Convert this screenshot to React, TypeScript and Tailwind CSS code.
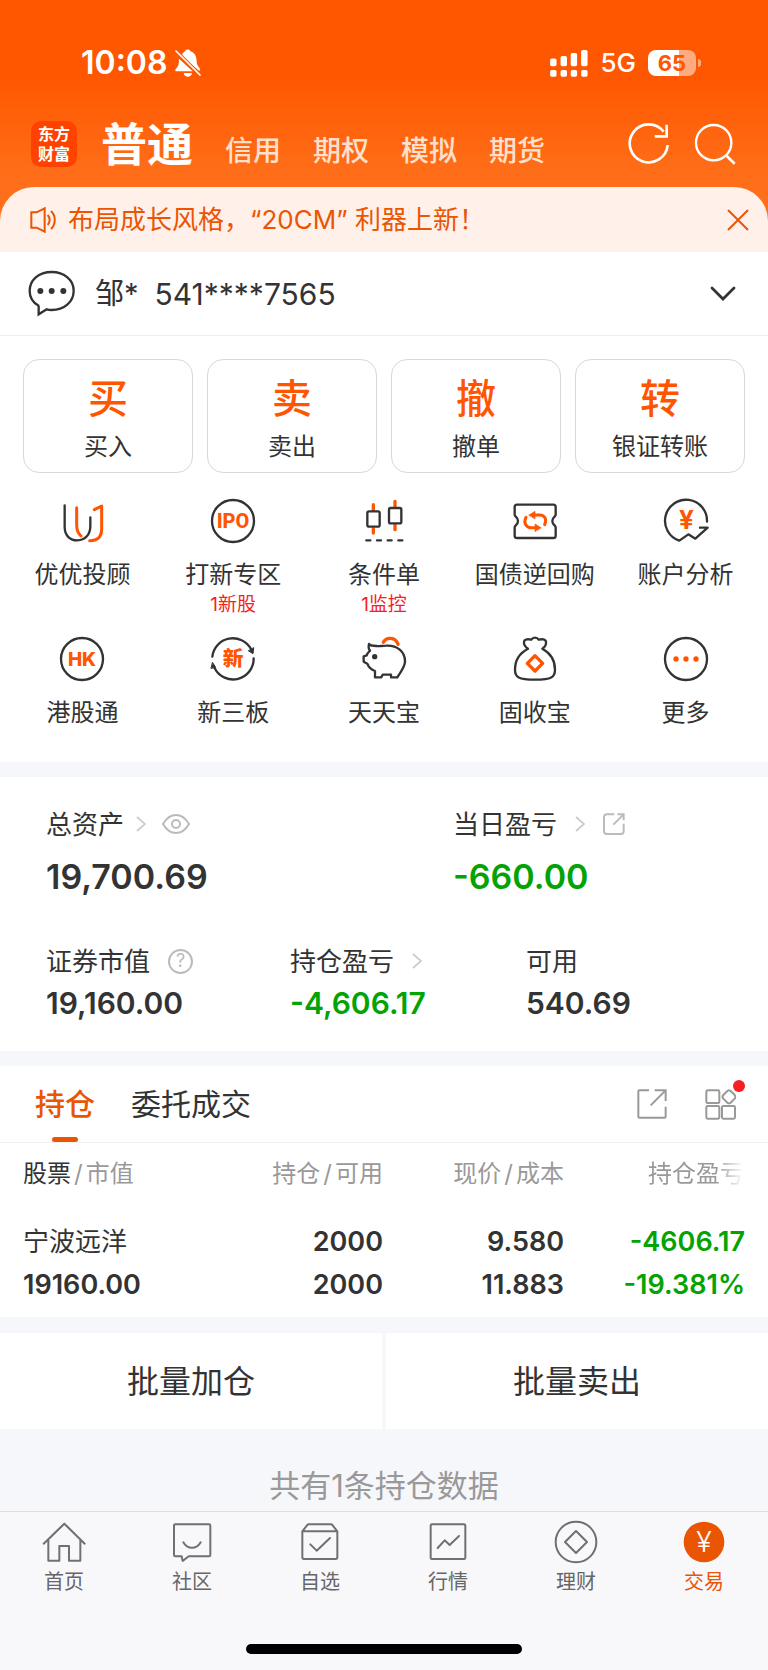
import type { ReactNode } from 'react';

const INK = '#333333';
const ORANGE = '#ff5500';

function Glyph({ children, className = '' }: { children: ReactNode; className?: string }) {
  return (
    <svg
      viewBox="0 0 144 144"
      className={`h-12 w-12 shrink-0 ${className}`}
      fill="none"
      strokeLinecap="round"
      strokeLinejoin="round"
      aria-hidden="true"
    >
      {children}
    </svg>
  );
}

const advisorIcon = (
  <Glyph>
    <path d="M20 25V90C20 117 37 130 58 130C82 130 97 112 97 88V61" stroke={INK} strokeWidth="7" />
    <path d="M56 32V84C56 99 60 109 69 117M109 38L131 27V95C131 119 118 131 95 131" stroke={ORANGE} strokeWidth="9" />
  </Glyph>
);
const ipoIcon = (
  <Glyph>
    <circle cx="72" cy="72" r="63" stroke={INK} strokeWidth="7" />
    <text x="72" y="93" textAnchor="middle" fontSize="60" fontWeight="800" fill={ORANGE} className="font-['Roboto',sans-serif]">IPO</text>
  </Glyph>
);
const candleIcon = (
  <Glyph>
    <path d="M40 23V38M40 95V108M105 13V28M105 84V98" stroke={ORANGE} strokeWidth="10" />
    <rect x="22" y="43" width="37" height="46" rx="5" stroke={INK} strokeWidth="7" />
    <rect x="87" y="33" width="37" height="46" rx="5" stroke={INK} strokeWidth="7" />
    <path d="M19 130H31M51 130H63M83 130H95M115 130H127" stroke={INK} strokeWidth="7" />
  </Glyph>
);
const repoIcon = (
  <Glyph>
    <path d="M18 23H127a7 7 0 0 1 7 7V53C134 60 124 60 124 72C124 84 134 84 134 91V116a7 7 0 0 1 -7 7H18a7 7 0 0 1 -7 -7V91C11 84 21 84 21 72C21 60 11 60 11 53V30a7 7 0 0 1 7 -7Z" stroke={INK} strokeWidth="7" />
    <path d="M70 54H86C102 54 108 68 101 83M45 61C37 76 44 92 60 92H74" stroke={ORANGE} strokeWidth="9" />
    <path d="M54 54L72 43V65ZM90 92L72 81V103Z" fill={ORANGE} stroke={ORANGE} strokeWidth="2" />
  </Glyph>
);
const analysisIcon = (
  <Glyph>
    <path d="M135 74A63 63 0 1 0 52 131L79 112L100 125L137 92H114" stroke={INK} strokeWidth="7" />
    <text x="73" y="95" textAnchor="middle" fontSize="78" fontWeight="700" fill={ORANGE} className="font-['Inter',sans-serif]">¥</text>
  </Glyph>
);
const hkIcon = (
  <Glyph>
    <circle cx="72" cy="72" r="63" stroke={INK} strokeWidth="7" />
    <text x="72" y="93" textAnchor="middle" fontSize="57" fontWeight="800" fill={ORANGE} className="font-['Inter',sans-serif]">HK</text>
  </Glyph>
);
const newBoardIcon = (
  <Glyph>
    <path d="M10 65A62 62 0 0 1 126 42M134 70A62 62 0 0 1 17 100" stroke={INK} strokeWidth="7" />
    <path d="M134 39L132 56L119 48ZM11 83L20 97L7 100Z" fill={INK} stroke={INK} strokeWidth="3" />
    <text x="72" y="94" textAnchor="middle" fontSize="62" fontWeight="800" fill={ORANGE} className="font-['Noto_Sans_CJK_SC',sans-serif]">新</text>
  </Glyph>
);
const piggyIcon = (
  <Glyph>
    <path d="M70 22C78 6 106 4 114 28" stroke={ORANGE} strokeWidth="10" />
    <path d="M27 27C33 35 41 31 50 33C56 35 64 32 78 32C112 30 135 50 135 79C135 96 124 108 112 127H93V119H68L64 127H45V108C36 105 26 97 22 86L11 80V64L20 61C22 54 26 51 30 47C25 42 25 35 27 27Z" fill="white" stroke={INK} strokeWidth="7" />
    <circle cx="44" cy="65" r="8" fill={INK} />
  </Glyph>
);
const bagIcon = (
  <Glyph>
    <path d="M51 41C42 35 38 28 39 21C40 11 53 12 61 14C66 6 78 6 83 14C92 12 104 11 105 21C106 29 102 36 94 41C118 54 132 76 132 104C132 126 122 134 72 134C22 134 12 126 12 104C12 76 26 54 51 41Z" stroke={INK} strokeWidth="7" />
    <path d="M72 62L95 85L72 108L49 85Z" stroke={ORANGE} strokeWidth="10" />
  </Glyph>
);
const moreIcon = (
  <Glyph>
    <circle cx="72" cy="72" r="63" stroke={INK} strokeWidth="7" />
    <circle cx="42" cy="72" r="8" fill={ORANGE} />
    <circle cx="72" cy="72" r="8" fill={ORANGE} />
    <circle cx="102" cy="72" r="8" fill={ORANGE} />
  </Glyph>
);

const quickActions = [
  { mark: '买', label: '买入' },
  { mark: '卖', label: '卖出' },
  { mark: '撤', label: '撤单' },
  { mark: '转', label: '银证转账' },
];

const services: { label: string; note?: string; icon: ReactNode }[] = [
  { label: '优优投顾', icon: advisorIcon },
  { label: '打新专区', note: '1新股', icon: ipoIcon },
  { label: '条件单', note: '1监控', icon: candleIcon },
  { label: '国债逆回购', icon: repoIcon },
  { label: '账户分析', icon: analysisIcon },
  { label: '港股通', icon: hkIcon },
  { label: '新三板', icon: newBoardIcon },
  { label: '天天宝', icon: piggyIcon },
  { label: '固收宝', icon: bagIcon },
  { label: '更多', icon: moreIcon },
];

const navItems: { label: string; active?: boolean; icon: ReactNode }[] = [
  {
    label: '首页',
    icon: <path d="M11 77L73 17L134 77M25 66V128H58V84H87V128H121V66" />,
  },
  {
    label: '社区',
    icon: <path d="M22 19H123a4 4 0 0 1 4 4V111a4 4 0 0 1 -4 4H62L44 129L41 115H22a4 4 0 0 1 -4 -4V23a4 4 0 0 1 4 -4ZM46 73C58 95 86 95 98 73" />,
  },
  {
    label: '自选',
    icon: <path d="M19 40L33 22Q35 19 39 19H104Q108 19 110 22L124 40V118a5 5 0 0 1 -5 5H24a5 5 0 0 1 -5 -5ZM19 40H124M43 79L62 98L102 60" />,
  },
  {
    label: '行情',
    icon: (
      <>
        <rect x="20" y="19" width="104" height="104" rx="4" />
        <path d="M41 90L62 67L77 81L105 54" />
      </>
    ),
  },
  {
    label: '理财',
    icon: (
      <>
        <circle cx="72" cy="72" r="61" />
        <path d="M72 39L105 72L72 105L39 72Z" />
      </>
    ),
  },
  {
    label: '交易',
    active: true,
    icon: (
      <>
        <circle cx="72" cy="72" r="61" fill="#ea5504" stroke="none" />
        <text x="72" y="103" textAnchor="middle" fontSize="86" fontWeight="300" fill="white" stroke="none" className="font-['Inter',sans-serif]">¥</text>
      </>
    ),
  },
];

function Chevron() {
  return (
    <svg viewBox="0 0 10 18" className="h-[18px] w-[10px]" fill="none" stroke="#cccccc" strokeWidth="1.8" aria-hidden="true">
      <path d="M1 2L9 9L1 16" />
    </svg>
  );
}

function Header() {
  return (
    <header className="bg-[linear-gradient(to_bottom,#ff5700_0px,#ff5700_75px,#ff6d18_170px,#ff7420_252px)]">
      <div className="flex h-[88px] items-center justify-between pt-[38px] pr-[67px] pl-[81px] text-white">
        <div className="flex items-center gap-2">
          <span className="text-[32px] leading-10 font-semibold">10:08</span>
          <svg viewBox="0 0 78 84" className="h-7 w-[26px]" fill="white" aria-label="静音">
            <path d="M18 22C22 12 28 8 30 7C31 0 45 0 46 7C60 11 64 22 65 36C65 46 68 50 73 56L76 63L72 65ZM12 29L53 67H4C0 67 0 62 3 59C11 51 12 42 12 29ZM26 72H51C49 87 28 87 26 72Z" />
            <path d="M3 6L75 78" stroke="#ff5700" strokeWidth="11" />
            <path d="M3 6L75 78" stroke="white" strokeWidth="5" strokeLinecap="round" />
          </svg>
        </div>
        <div className="flex items-center">
          <svg viewBox="0 0 112 80" className="h-[27px] w-[38px]" fill="white" aria-label="信号">
            <rect x="0" y="25" width="19" height="23" rx="5" />
            <rect x="31" y="18" width="19" height="30" rx="5" />
            <rect x="61" y="9" width="19" height="39" rx="5" />
            <rect x="92" y="0" width="19" height="48" rx="5" />
            <rect x="0" y="59" width="19" height="20" rx="5" />
            <rect x="31" y="59" width="19" height="20" rx="5" />
            <rect x="61" y="59" width="19" height="20" rx="5" />
            <rect x="92" y="59" width="19" height="20" rx="5" />
          </svg>
          <span className="ml-3 text-[26px] leading-8 font-medium">5G</span>
          <div className="ml-3 flex h-[26px] w-12 items-center justify-center rounded-lg bg-[linear-gradient(to_right,#ffffff_65%,#ffab80_65%)]">
            <span className="text-[22px] leading-6 font-bold text-[#ff5700]">65</span>
          </div>
          <span className="ml-0.5 h-2 w-[3px] rounded-r-full bg-[#ffab80]" />
        </div>
      </div>
      <div className="flex h-[99px] items-center pt-3 pr-8 pl-[31px]">
        <div className="grid h-[46px] w-[46px] shrink-0 place-content-center rounded-[10px] bg-[#ff4200] text-center text-[16px] leading-5 font-bold text-white">
          <p>东方<br />财富</p>
        </div>
        <nav className="ml-6 flex items-baseline gap-8 text-[28px] font-medium text-[#ffe0cf]">
          <a href="#normal" className="text-[46px] leading-[60px] font-bold text-white">普通</a>
          <a href="#credit">信用</a>
          <a href="#options">期权</a>
          <a href="#simulate">模拟</a>
          <a href="#futures">期货</a>
        </nav>
        <div className="ml-auto flex items-center gap-6">
          <button type="button" aria-label="刷新">
            <svg viewBox="0 0 126 126" className="h-[42px] w-[42px]" fill="none" stroke="white" strokeWidth="8" aria-hidden="true">
              <path d="M119 66A57 57 0 1 1 107 26M116 5V40H80" />
            </svg>
          </button>
          <button type="button" aria-label="搜索">
            <svg viewBox="0 0 126 126" className="h-[42px] w-[42px]" fill="none" stroke="white" strokeWidth="7" aria-hidden="true">
              <circle cx="59" cy="59" r="53" />
              <path d="M96 97L122 122" strokeWidth="8" />
            </svg>
          </button>
        </div>
      </div>
      <div className="flex h-[65px] items-center rounded-t-[34px] bg-[#fff1ea] pr-[19px] pl-[30px] text-[#ea5504]">
        <svg viewBox="0 0 78 78" className="h-[26px] w-[26px]" fill="none" stroke="#ea5504" strokeWidth="6" aria-hidden="true">
          <path d="M4 16H20L44 4V74L20 62H4ZM53 24C61 32 61 46 53 54M63 12C78 26 78 52 63 66" />
        </svg>
        <p className="ml-3 text-[26px] leading-9">布局成长风格，“20CM” 利器上新！</p>
        <button type="button" aria-label="关闭" className="ml-auto">
          <svg viewBox="0 0 22 22" className="h-[22px] w-[22px]" stroke="#ea5504" strokeWidth="2" aria-hidden="true">
            <path d="M1 1L21 21M21 1L1 21" />
          </svg>
        </button>
      </div>
    </header>
  );
}

function Account() {
  return (
    <button type="button" className="flex h-[84px] w-full items-center border-b border-[#eeeeee] bg-white pr-8 pl-7">
      <svg viewBox="0 0 141 141" className="h-[47px] w-[47px]" fill="none" stroke={INK} strokeWidth="7" aria-hidden="true">
        <path d="M33 108C14 98 5 82 5 63C5 30 32 6 71 6C109 6 137 30 137 62C137 96 108 120 71 120Q62 120 56 118L32 133V107" />
        <g fill={INK} stroke="none">
          <circle cx="37" cy="63" r="9" />
          <circle cx="71" cy="63" r="9" />
          <circle cx="106" cy="63" r="9" />
        </g>
      </svg>
      <span className="ml-5 text-[29px] leading-9">邹*</span>
      <span className="ml-4 text-[30px] leading-9">541****7565</span>
      <svg viewBox="0 0 26 16" className="ml-auto h-4 w-[26px]" fill="none" stroke={INK} strokeWidth="2.8" strokeLinecap="round" aria-hidden="true">
        <path d="M2 2L13 13L24 2" />
      </svg>
    </button>
  );
}

function Services() {
  return (
    <section className="bg-white pb-[31px]">
      <div className="grid grid-cols-4 gap-3.5 px-[23px] pt-[23px]">
        {quickActions.map((a) => (
          <button key={a.label} type="button" className="flex h-[114px] flex-col items-center rounded-2xl border border-[#d8d8d8] pt-[15px]">
            <span className="text-[40px] leading-[48px] font-medium text-[#ff5500]">{a.mark}</span>
            <span className="mt-1.5 text-[24px] leading-9">{a.label}</span>
          </button>
        ))}
      </div>
      <div className="grid grid-cols-5 gap-y-[18px] px-[7px] pt-6">
        {services.map((s) => (
          <button key={s.label} type="button" className="flex flex-col items-center justify-start">
            {s.icon}
            <span className="mt-3 text-[24px] leading-9 whitespace-nowrap">{s.label}</span>
            {s.note && <span className="text-[19px] leading-6 text-[#f51f24]">{s.note}</span>}
          </button>
        ))}
      </div>
    </section>
  );
}

function Assets() {
  return (
    <section className="mt-[15px] bg-white px-[46px] pt-[29px] pb-7">
      <div className="grid grid-cols-[407px_1fr]">
        <div>
          <div className="flex h-9 items-center text-[26px]">
            总资产
            <span className="ml-3"><Chevron /></span>
            <button type="button" aria-label="隐藏金额" className="ml-4">
              <svg viewBox="0 0 84 60" className="h-5 w-7" fill="none" stroke="#bbbbbb" strokeWidth="6" aria-hidden="true">
                <path d="M3 30C24 -6 60 -6 81 30C60 66 24 66 3 30Z" />
                <circle cx="42" cy="30" r="12" />
              </svg>
            </button>
          </div>
          <div className="mt-3 text-[34px] leading-[46px] font-semibold">19,700.69</div>
        </div>
        <div>
          <div className="flex h-9 items-center text-[26px]">
            当日盈亏
            <span className="ml-[18px]"><Chevron /></span>
            <button type="button" aria-label="分享盈亏" className="ml-[18px]">
              <svg viewBox="0 0 66 66" className="h-[22px] w-[22px]" fill="none" stroke="#bbbbbb" strokeWidth="6" aria-hidden="true">
                <path d="M34 4H12Q3 4 3 13V54Q3 63 12 63H53Q62 63 62 54V32M43 4H62V22M61 5L31 35" />
              </svg>
            </button>
          </div>
          <div className="mt-3 text-[34px] leading-[46px] font-semibold text-[#03a303]">-660.00</div>
        </div>
      </div>
      <div className="mt-[43px] grid grid-cols-[244px_236px_1fr]">
        <div>
          <div className="flex h-9 items-center text-[26px]">
            证券市值
            <button type="button" aria-label="说明" className="ml-[18px] flex h-[25px] w-[25px] items-center justify-center rounded-full border-2 border-[#bbbbbb] text-[18px] leading-none text-[#bbbbbb]">
              ?
            </button>
          </div>
          <div className="mt-1 text-[30px] leading-10 font-semibold">19,160.00</div>
        </div>
        <div>
          <div className="flex h-9 items-center text-[26px]">
            持仓盈亏
            <span className="ml-[18px]"><Chevron /></span>
          </div>
          <div className="mt-1 text-[30px] leading-10 font-semibold text-[#03a303]">-4,606.17</div>
        </div>
        <div>
          <div className="flex h-9 items-center text-[26px]">可用</div>
          <div className="mt-1 text-[30px] leading-10 font-semibold">540.69</div>
        </div>
      </div>
    </section>
  );
}

function Positions() {
  return (
    <section className="mt-[15px] bg-white">
      <div className="flex h-[77px] border-b border-[#f2f2f2] pr-8 pl-[35px]">
        <div role="tablist" className="flex gap-9 text-[30px]">
          <button type="button" role="tab" aria-selected="true" className="flex flex-col items-center pt-[18px] font-medium text-[#ea5504]">
            <span className="leading-10">持仓</span>
            <span className="mt-auto h-[5px] w-[26px] rounded-full bg-[#ea5504]" />
          </button>
          <button type="button" role="tab" aria-selected="false" className="flex flex-col pt-[18px]">
            <span className="leading-10">委托成交</span>
          </button>
        </div>
        <div className="ml-auto flex items-center gap-[38px]">
          <button type="button" aria-label="分享持仓">
            <svg viewBox="0 0 90 90" className="h-[30px] w-[30px]" fill="none" stroke="#999999" strokeWidth="6" aria-hidden="true">
              <path d="M36 4H7Q4 4 4 7V83Q4 86 7 86H83Q86 86 86 83V53M53 4H86V36M85 5L41 49" />
            </svg>
          </button>
          <button type="button" aria-label="更多工具" className="relative">
            <svg viewBox="0 0 93 93" className="h-[31px] w-[31px]" fill="none" stroke="#999999" strokeWidth="6" aria-hidden="true">
              <rect x="4" y="4" width="39" height="38" rx="4" />
              <rect x="4" y="51" width="39" height="38" rx="4" />
              <rect x="51" y="51" width="39" height="38" rx="4" />
              <path d="M67 6Q72 2 77 6L89 18Q94 24 89 29L77 41Q72 45 67 41L55 29Q50 24 55 18Z" />
            </svg>
            <span className="absolute -top-[9px] -right-[9px] h-3 w-3 rounded-full bg-[#f51f24]" />
          </button>
        </div>
      </div>
      <table className="w-full table-fixed text-right">
        <colgroup>
          <col />
          <col className="w-[182px]" />
          <col className="w-[181px]" />
          <col className="w-[204px]" />
        </colgroup>
        <thead>
          <tr className="h-[62px] text-[24px] whitespace-nowrap text-[#999999] [&>th]:font-normal">
            <th scope="col" className="pl-[23px] text-left"><span className="text-[#333333]">股票</span><span className="mx-[3px]">/</span>市值</th>
            <th scope="col">持仓<span className="mx-[3px]">/</span>可用</th>
            <th scope="col">现价<span className="mx-[3px]">/</span>成本</th>
            <th scope="col" className="pr-6"><span className="[mask-image:linear-gradient(to_right,black_70%,transparent)]">持仓盈亏</span></th>
          </tr>
        </thead>
        <tbody className="text-[27px] font-semibold">
          <tr className="h-[58px] align-bottom leading-[43px]">
            <td className="pl-[23px] text-left text-[26px] font-normal">宁波远洋</td>
            <td>2000</td>
            <td>9.580</td>
            <td className="pr-[23px] text-[#03a303]">-4606.17</td>
          </tr>
          <tr className="h-[54px] align-top leading-[43px]">
            <td className="pl-[23px] text-left">19160.00</td>
            <td>2000</td>
            <td>11.883</td>
            <td className="pr-[23px] text-[#03a303]">-19.381%</td>
          </tr>
        </tbody>
      </table>
    </section>
  );
}

export default function App() {
  return (
    <div className="min-h-screen bg-[#f6f7fa] font-['Inter','Noto_Sans_CJK_SC',sans-serif] text-[#333333]">
      <Header />
      <Account />
      <Services />
      <Assets />
      <Positions />
      <div className="mt-4 grid grid-cols-2 gap-1 text-[32px] leading-10">
        <button type="button" className="h-24 bg-white pt-0.5">批量加仓</button>
        <button type="button" className="h-24 bg-white pt-0.5">批量卖出</button>
      </div>
      <p className="pt-9 pb-1 text-center text-[31px] leading-[42px] text-[#999999]">共有1条持仓数据</p>
      <footer className="border-t border-[#dddee0] bg-[#f8f8fb] pb-4">
        <nav className="grid grid-cols-6 pt-1.5">
          {navItems.map((n) => (
            <a key={n.label} href={`#${n.label}`} className={`flex flex-col items-center ${n.active ? 'text-[#ea5504]' : 'text-[#666666]'}`}>
              <Glyph>
                <g stroke="#707070" strokeWidth="6">{n.icon}</g>
              </Glyph>
              <span className="mt-0.5 text-[20px] leading-7">{n.label}</span>
            </a>
          ))}
        </nav>
        <div className="mx-auto mt-12 h-2.5 w-[36%] rounded-full bg-black" />
      </footer>
    </div>
  );
}
